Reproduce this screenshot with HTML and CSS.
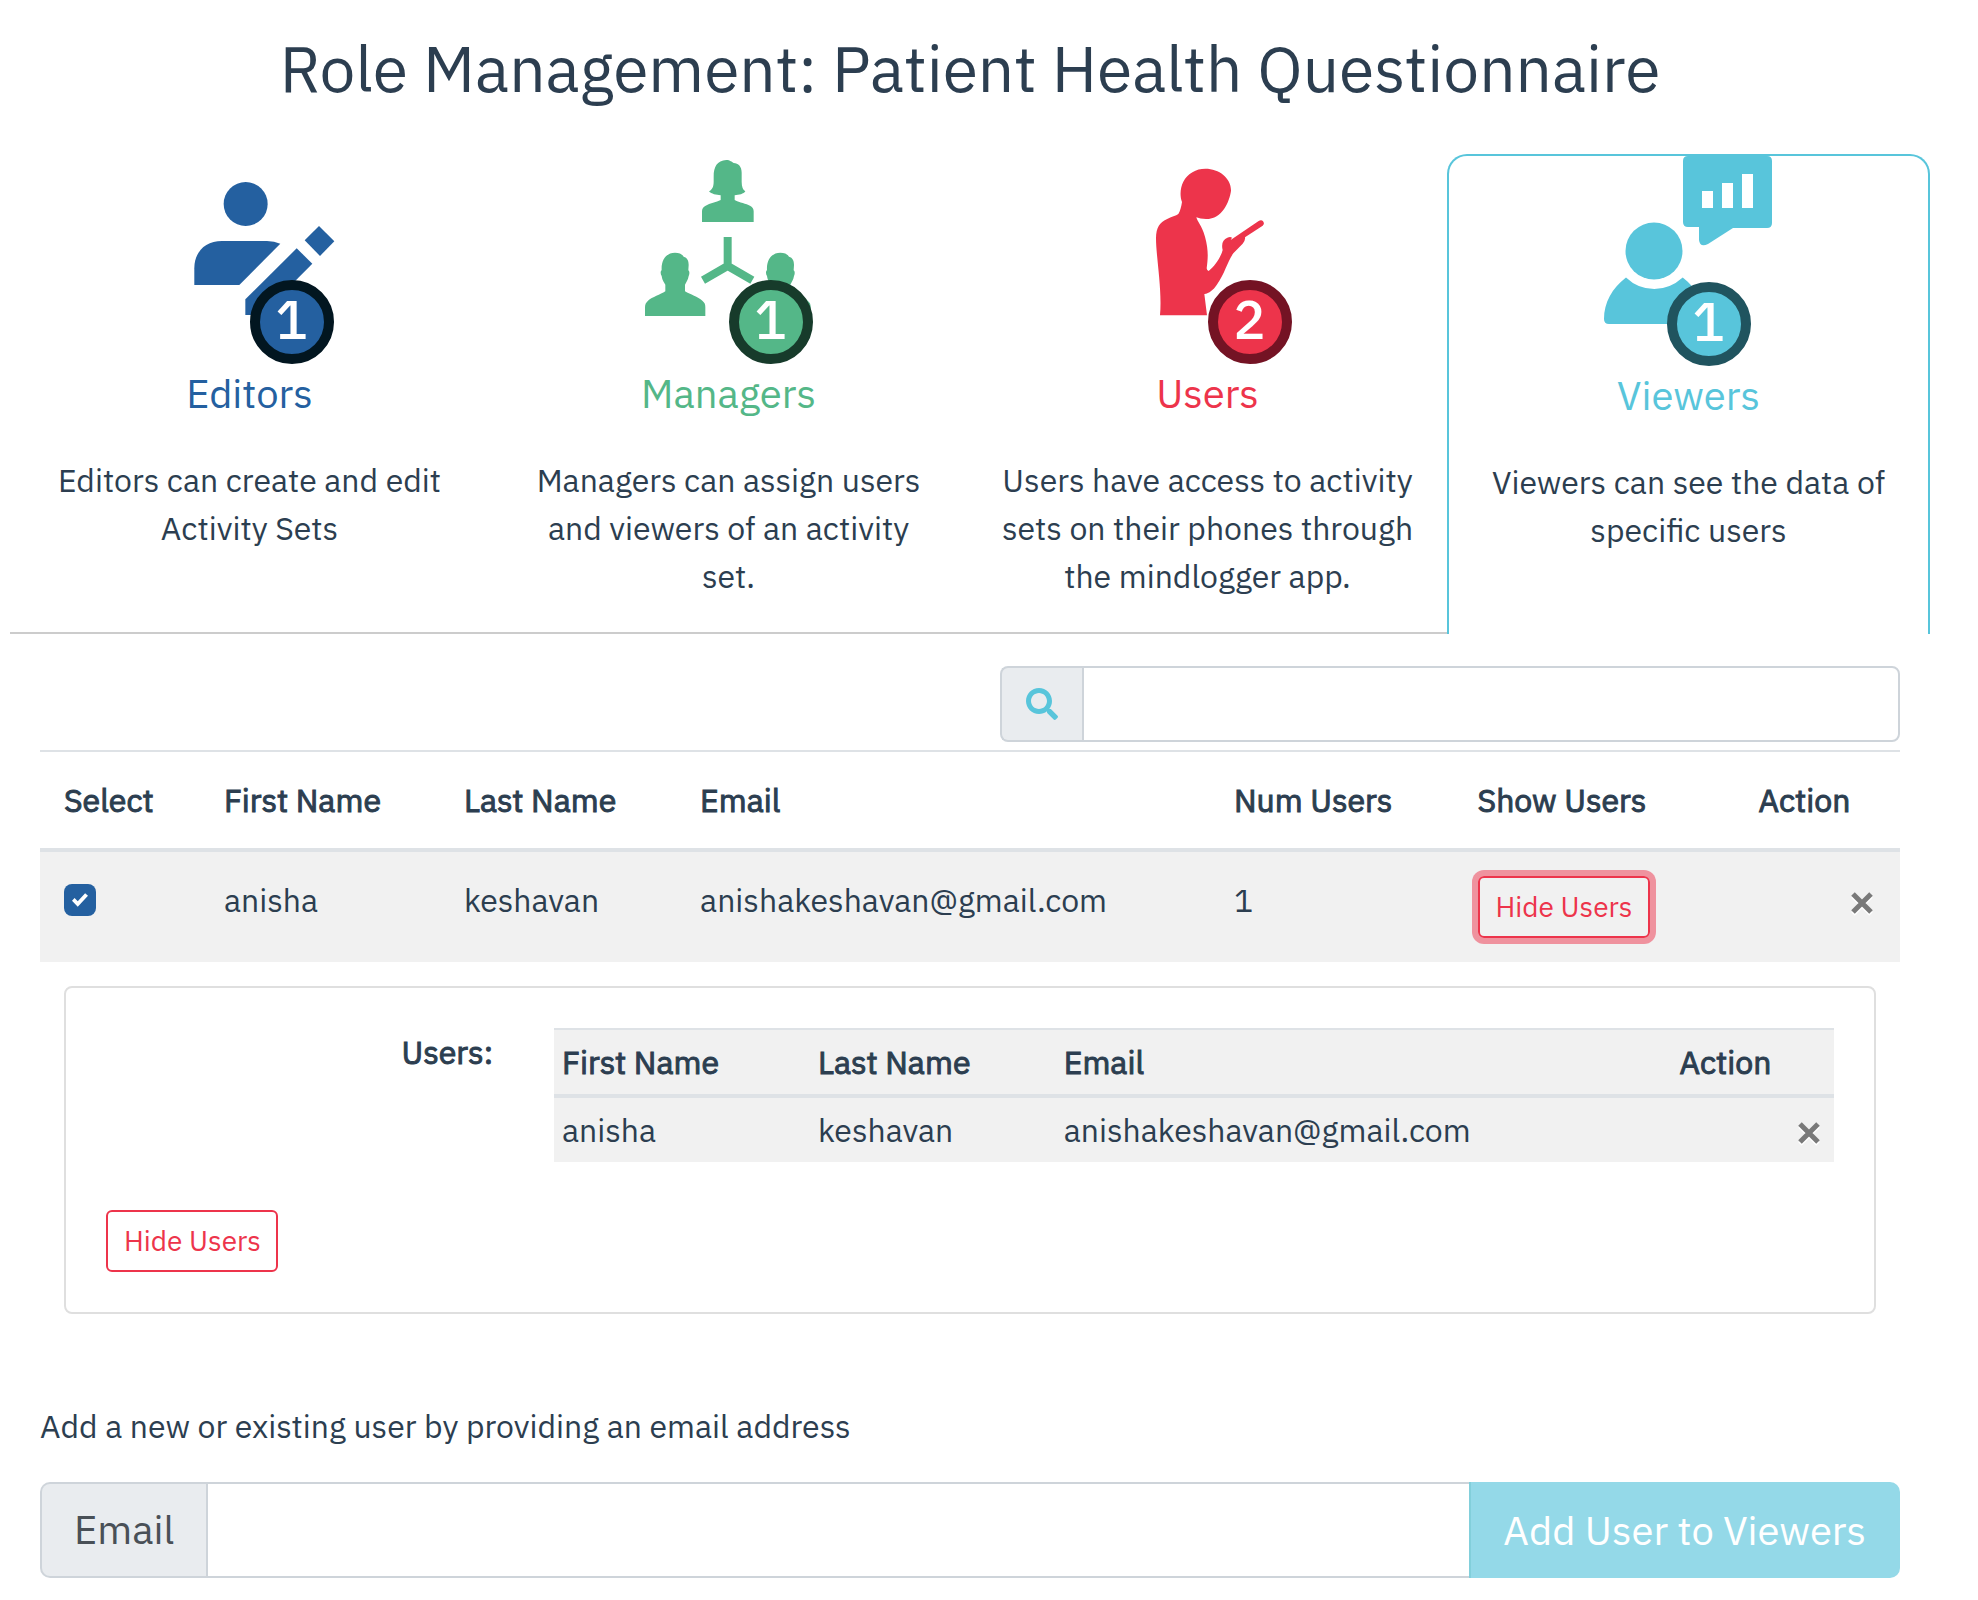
FILE: index.html
```html
<!DOCTYPE html>
<html lang="en">
<head>
<meta charset="utf-8">
<meta name="viewport" content="width=device-width, initial-scale=1">
<title>Role Management: Patient Health Questionnaire</title>
<link rel="stylesheet" href="styles.css">
</head>
<body>
<main class="page">
  <h1 class="page-title">Role Management: Patient Health Questionnaire</h1>

  <nav class="roles" aria-label="Roles">
    <a class="role role-editors" href="#editors">
      <span class="role-icon">
        <svg viewBox="-31 42 540 504" aria-hidden="true">
          <circle cx="226" cy="192" r="66"/>
          <path d="M72 435V385C72 335 105 303 155 303H290Q312 303 330 311L207 435Z"/>
          <path d="M379 325L426 371L273 525H225V478Z"/>
          <path d="M446 258L492 304L449 348L403 301Z"/>
        </svg>
        <span class="badge">1</span>
      </span>
      <span class="role-name">Editors</span>
      <span class="role-text">Editors can create and edit Activity Sets</span>
    </a>
    <a class="role role-managers" href="#managers">
      <span class="role-icon">
        <svg viewBox="58 42 540 504" aria-hidden="true">
          <path d="M320 60C332 60 336 66 342 69C356 69 366 80 366 98V125C366 140 370 150 377 154C372 162 358 165 345 166V180C360 188 380 191 391 197C398 201 402 206 402 214V246H247V214C247 206 251 201 258 197C270 190 290 187 303 180V166C290 165 275 162 268 154C278 148 282 140 282 125V110C282 80 292 62 320 60Z"/>
          <path d="M166 338C178 338 188 342 192 350C203 353 207 362 207 375L206 391C210 393 210 402 207 408C205 420 200 426 196 434V454C212 464 235 470 248 482C255 488 257 492 257 502V528H76V502C76 492 79 488 85 482C98 471 122 464 137 454V434C133 426 128 422 126 408C122 402 122 393 126 391C124 360 140 338 166 338Z"/>
          <path transform="translate(316 0)" d="M166 338C178 338 188 342 192 350C203 353 207 362 207 375L206 391C210 393 210 402 207 408C205 420 200 426 196 434V454C212 464 235 470 248 482C255 488 257 492 257 502V528H76V502C76 492 79 488 85 482C98 471 122 464 137 454V434C133 426 128 422 126 408C122 402 122 393 126 391C124 360 140 338 166 338Z"/>
          <path class="links" d="M324 291V378M250 421L324 378L398 421"/>
        </svg>
        <span class="badge">1</span>
      </span>
      <span class="role-name">Managers</span>
      <span class="role-text">Managers can assign users and viewers of an activity set.</span>
    </a>
    <a class="role role-users" href="#users">
      <span class="role-icon">
        <svg viewBox="-6 42 540 504" aria-hidden="true">
          <path d="M186 186C178 165 182 140 190 125C203 100 228 86 256 86C298 86 334 115 333 152C328 185 308 237 258 237Q240 237 229 232C232 245 245 255 255 290C266 330 264 355 260 385Q261 393 266 393C285 378 303 350 308 330C303 310 310 298 322 293Q331 289 336 293L332 300L416 243C428 235 437 250 428 257L375 292Q377 300 368 311L340 340C322 365 315 400 290 435C280 450 268 460 253 462L261 526H120C127 450 108 350 108 295C108 262 120 248 140 238C155 230 168 227 175 222C180 215 184 200 186 186Z"/>
        </svg>
        <span class="badge">2</span>
      </span>
      <span class="role-name">Users</span>
      <span class="role-text">Users have access to activity sets on their phones through the mindlogger app.</span>
    </a>
    <a class="role role-viewers active" href="#viewers" aria-current="page">
      <span class="role-icon">
        <svg viewBox="0 0 180 168" aria-hidden="true">
          <path fill-rule="evenodd" d="M89 0H168Q173 0 173 5V67Q173 72 168 72H134L109 88Q101 92 100 84V71H89Q84 71 84 66V5Q84 0 89 0ZM103 35V52H114V35ZM123 27V52H134V27ZM143 18V52H154V18Z"/>
          <circle cx="55" cy="95" r="28.5"/>
          <path d="M27 121.500C13 132 5 147 5 163Q5 168 10 168H100Q105 168 105 163C105 147 98 132 83.700 121.500Q71 133 55.300 133Q39 133 27 121.500Z"/>
        </svg>
        <span class="badge">1</span>
      </span>
      <span class="role-name">Viewers</span>
      <span class="role-text">Viewers can see the data of specific users</span>
    </a>
  </nav>

  <section class="content">
    <form class="group search">
      <label class="addon search-addon" for="search" aria-label="Search">
        <svg class="search-icon" viewBox="0 0 512 512" aria-hidden="true"><path d="M505 442.700L405.300 343c-4.500-4.500-10.600-7-17-7H372c27.600-35.300 44-79.700 44-128C416 93.100 322.900 0 208 0S0 93.100 0 208s93.100 208 208 208c48.300 0 92.700-16.400 128-44v16.300c0 6.400 2.500 12.500 7 17l99.700 99.700c9.400 9.400 24.600 9.400 33.900 0l28.300-28.300c9.400-9.400 9.400-24.600.1-34zM208 336c-70.700 0-128-57.200-128-128 0-70.700 57.200-128 128-128 70.700 0 128 57.200 128 128 0 70.700-57.200 128-128 128z"/></svg>
      </label>
      <input class="field" id="search" type="text">
    </form>

    <table class="table viewers">
      <colgroup><col class="c-select"><col class="c-first"><col class="c-last"><col class="c-email"><col class="c-num"><col class="c-show"><col></colgroup>
      <thead>
        <tr><th scope="col">Select</th><th scope="col">First Name</th><th scope="col">Last Name</th><th scope="col">Email</th><th scope="col">Num Users</th><th scope="col">Show Users</th><th scope="col">Action</th></tr>
      </thead>
      <tbody>
        <tr class="shaded">
          <td><input class="check" type="checkbox" checked aria-label="Select anisha keshavan"></td>
          <td>anisha</td>
          <td>keshavan</td>
          <td>anishakeshavan@gmail.com</td>
          <td>1</td>
          <td><button class="btn focused" type="button">Hide Users</button></td>
          <td class="action"><button class="close" type="button" aria-label="Remove viewer"><svg viewBox="0 0 28 48" aria-hidden="true"><path class="glow" d="M5 20L23 38M23 20L5 38"/><path d="M5 18L23 36M23 18L5 36"/></svg></button></td>
        </tr>
        <tr>
          <td colspan="7">
            <div class="card">
              <div class="card-row">
                <b class="card-label" id="users-label">Users:</b>
                <table class="table nested" aria-labelledby="users-label">
                  <colgroup><col class="n-first"><col class="n-last"><col class="n-email"><col></colgroup>
                  <thead>
                    <tr><th scope="col">First Name</th><th scope="col">Last Name</th><th scope="col">Email</th><th scope="col">Action</th></tr>
                  </thead>
                  <tbody>
                    <tr>
                      <td>anisha</td>
                      <td>keshavan</td>
                      <td>anishakeshavan@gmail.com</td>
                      <td class="action"><button class="close" type="button" aria-label="Remove user"><svg viewBox="0 0 28 48" aria-hidden="true"><path class="glow" d="M5 20L23 38M23 20L5 38"/><path d="M5 18L23 36M23 18L5 36"/></svg></button></td>
                    </tr>
                  </tbody>
                </table>
              </div>
              <button class="btn" type="button">Hide Users</button>
            </div>
          </td>
        </tr>
      </tbody>
    </table>

    <p class="hint">Add a new or existing user by providing an email address</p>
    <form class="group add">
      <label class="addon" for="email">Email</label>
      <input class="field" id="email" type="email">
      <button class="add-btn" type="button">Add User to Viewers</button>
    </form>
  </section>
</main>
</body>
</html>
```
FILE: styles.css
```css
*, *::before, *::after { box-sizing: border-box; }

body {
  margin: 0;
  background: #fff;
  color: #2c3e50;
  font-family: "IBM Plex Sans", "Liberation Sans", Arial, sans-serif;
  font-size: 32px;
  line-height: 48px;
}

button, input { font: inherit; margin: 0; }

.page { padding: 30px 48px 22px 10px; }

.page-title {
  margin: 0 0 48px;
  font-size: 64px;
  font-weight: 400;
  line-height: 76px;
  text-align: center;
}

/* Role tabs */
.roles {
  display: flex;
  border-bottom: 2px solid #ccc;
}

.role {
  flex: 1 1 0;
  display: flex;
  flex-direction: column;
  align-items: center;
  margin-bottom: -2px;
  padding-bottom: 34px;
  color: inherit;
  text-align: center;
  text-decoration: none;
}

.role.active {
  border: 2px solid var(--role);
  border-bottom: 0;
  border-radius: 20px 20px 0 0;
  background: #fff;
}

.role-editors { --role: #2460a0; --ring: #021620; }
.role-managers { --role: #54b788; --ring: #173b2b; }
.role-users { --role: #ed344b; --ring: #741324; }
.role-viewers { --role: #58c5db; --ring: #20545f; }

.role-icon {
  position: relative;
  width: 180px;
  height: 168px;
  margin-bottom: 47px;
}

.role-icon svg {
  display: block;
  width: 100%;
  height: 100%;
  fill: var(--role);
}

.role-icon .links { fill: none; stroke: var(--role); stroke-width: 24; }

.badge {
  position: absolute;
  top: 126px;
  right: 6px;
  width: 84px;
  height: 84px;
  border: 10px solid var(--ring);
  border-radius: 50%;
  background: var(--role);
  color: #fff;
  font-size: 54px;
  font-weight: 500;
  line-height: 58px;
}

.role-viewers .badge { right: 28px; }

.role-name {
  margin-bottom: 39px;
  color: var(--role);
  font-size: 40px;
}

.role-text { max-width: 416px; }

/* Main column */
.content { padding: 32px 30px 0; }

/* Input groups */
.group { display: flex; }

.addon {
  display: flex;
  align-items: center;
  padding: 0 32px;
  border: 2px solid #ced4da;
  border-right: 0;
  border-radius: 10px 0 0 10px;
  background: #e9ecef;
  color: #495057;
}

.field {
  flex: 1;
  min-width: 0;
  padding: 0 24px;
  border: 2px solid #ced4da;
  border-radius: 0 8px 8px 0;
  background: #fff;
  color: #495057;
  outline: 0;
}

.search {
  width: 900px;
  max-width: 100%;
  height: 76px;
  margin: 0 0 8px auto;
}

.search-addon { padding: 0 24px; border-radius: 8px 0 0 8px; }
.search-icon { width: 32px; height: 32px; fill: #58c5db; }

.add { height: 96px; font-size: 40px; }
.add .addon, .add-btn { padding-bottom: 2px; }
.add .field { border-right: 0; border-radius: 0; }

.add-btn {
  padding: 0 34px 0 32px;
  border: 0;
  border-left: 2px solid #82cfdb;
  border-radius: 0 10px 10px 0;
  background: #94d9e8;
  color: #fff;
}

/* Tables */
.table {
  width: 100%;
  border-spacing: 0;
  table-layout: fixed;
}

th, td { padding: 24px; text-align: left; vertical-align: top; }

th {
  border-top: 2px solid #dee2e6;
  border-bottom: 4px solid #dee2e6;
}

th, .card-label {
  font-weight: 400;
  -webkit-text-stroke: 1px currentColor;
}

.c-select { width: 8.6%; }
.c-first { width: 12.9%; }
.c-last { width: 12.7%; }
.c-email { width: 28.7%; }
.c-num { width: 13.1%; }
.c-show { width: 15.1%; }

.shaded, .nested { background: #f1f1f1; }
.action { text-align: right; }

.nested th, .nested td { padding: 8px; }
.nested .action { padding-right: 11px; }
.n-first { width: 20%; }
.n-last { width: 19.2%; }
.n-email { width: 48.1%; }

.check {
  display: grid;
  place-items: center;
  width: 32px;
  height: 32px;
  margin-top: 8px;
  border-radius: 8px;
  background: #2460a0;
  appearance: none;
}

.check:checked::before {
  content: "";
  width: 16px;
  height: 16px;
  background: #fff;
  clip-path: polygon(0 54%, 16% 38%, 36% 58%, 82% 8%, 100% 24%, 36% 92%);
}

.btn {
  display: block;
  padding: 8px 15px 8px 16px;
  border: 2px solid #ed344b;
  border-radius: 6px;
  background: transparent;
  color: #ed344b;
  font-size: 28px;
  line-height: 42px;
}

.btn.focused { box-shadow: 0 0 0 6px rgba(237, 52, 75, 0.5); }

.close {
  display: block;
  width: 28px;
  height: 48px;
  margin-left: auto;
  padding: 0;
  border: 0;
  background: none;
}

.close svg { display: block; width: 28px; height: 48px; fill: none; stroke: #797979; stroke-width: 5; }
.close .glow { stroke: #fff; }

/* Expanded viewer */
.card {
  padding: 40px;
  border: 2px solid #dfdfdf;
  border-radius: 8px;
}

.card-row {
  display: grid;
  grid-template-columns: 387px 1fr;
  column-gap: 61px;
  margin-bottom: 48px;
}

.card-label { text-align: right; }

.hint { margin: 64px 0 32px; }
```
